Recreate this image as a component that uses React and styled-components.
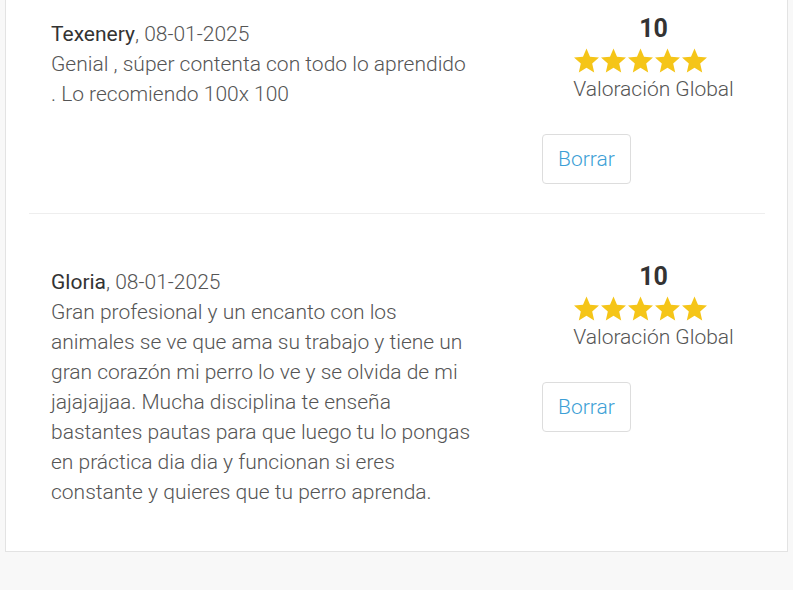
import React from "react";
import styled, { createGlobalStyle } from "styled-components";

const Global = createGlobalStyle`
  html, body { margin: 0; padding: 0; background: #f8f8f8; }
  body { font-family: Roboto, "Noto Sans", Arial, sans-serif; }
`;

const Page = styled.div`
  padding: 0 5px;
  overflow: hidden;
  height: 590px;
`;

const Card = styled.section`
  margin-top: -35px;
  background: #fff;
  border: 1px solid #e3e3e3;
  padding: 0 22px 15px 23px;
`;

const Review = styled.article`
  display: flex;
  padding: 47px 0 29px;
`;

const Divider = styled.hr`
  margin: 0;
  border: 0;
  border-top: 1px solid #eeeeee;
`;

const Body = styled.div`
  width: 422px;
  padding: 6px 69px 0 22px;
  flex: none;
  font-size: 21px;
  line-height: 30px;
  font-weight: 300;
  color: #555;
`;

const Author = styled.div``;

const Name = styled.span`
  font-weight: 400;
  color: #333;
`;

const Text = styled.p`
  margin: 0;
`;

const Side = styled.div`
  flex: 1;
  display: flex;
  flex-direction: column;
`;

const Rating = styled.div`
  align-self: center;
  display: flex;
  flex-direction: column;
  align-items: center;
`;

const Score = styled.div`
  font-size: 25px;
  line-height: 30px;
  font-weight: 700;
  color: #333;
  margin-top: 1px;
`;

const Stars = styled.div`
  align-self: flex-start;
  display: flex;
  margin-top: 4px;
`;

const Label = styled.div`
  font-size: 21px;
  line-height: 30px;
  font-weight: 300;
  color: #555;
`;

const Button = styled.button`
  align-self: flex-start;
  margin-top: 30px;
  font-family: inherit;
  font-size: 21px;
  font-weight: 300;
  line-height: 30px;
  padding: 9px 15px;
  color: #3d9fd6;
  background: #fff;
  border: 1px solid #dddddd;
  border-radius: 4px;
  cursor: pointer;
`;

const Star = () => (
  <svg width="27" height="26" viewBox="0 0 27 26">
    <polygon
      fill="#f5c518"
      points="13.5,0.5 17,8.7 26,9.5 19.2,15.4 21.2,24.5 13.5,19.8 5.8,24.5 7.8,15.4 1,9.5 10,8.7"
    />
  </svg>
);

const reviews = [
  {
    name: "Texenery",
    date: "08-01-2025",
    score: 10,
    text: "Genial , súper contenta con todo lo aprendido . Lo recomiendo 100x 100",
  },
  {
    name: "Gloria",
    date: "08-01-2025",
    score: 10,
    text:
      "Gran profesional y un encanto con los animales se ve que ama su trabajo y tiene un gran corazón mi perro lo ve y se olvida de mi jajajajjaa. Mucha disciplina te enseña bastantes pautas para que luego tu lo pongas en práctica dia dia y funcionan si eres constante y quieres que tu perro aprenda.",
  },
];

export default function App() {
  return (
    <>
      <Global />
      <Page>
        <Card>
          {reviews.map((r, i) => (
            <React.Fragment key={r.name}>
              {i > 0 && <Divider />}
              <Review>
                <Body>
                  <Author>
                    <Name>{r.name}</Name>, {r.date}
                  </Author>
                  <Text>{r.text}</Text>
                </Body>
                <Side>
                  <Rating>
                    <Score>{r.score}</Score>
                    <Stars>
                      {[0, 1, 2, 3, 4].map((s) => (
                        <Star key={s} />
                      ))}
                    </Stars>
                    <Label>Valoración Global</Label>
                  </Rating>
                  <Button>Borrar</Button>
                </Side>
              </Review>
            </React.Fragment>
          ))}
        </Card>
      </Page>
    </>
  );
}
